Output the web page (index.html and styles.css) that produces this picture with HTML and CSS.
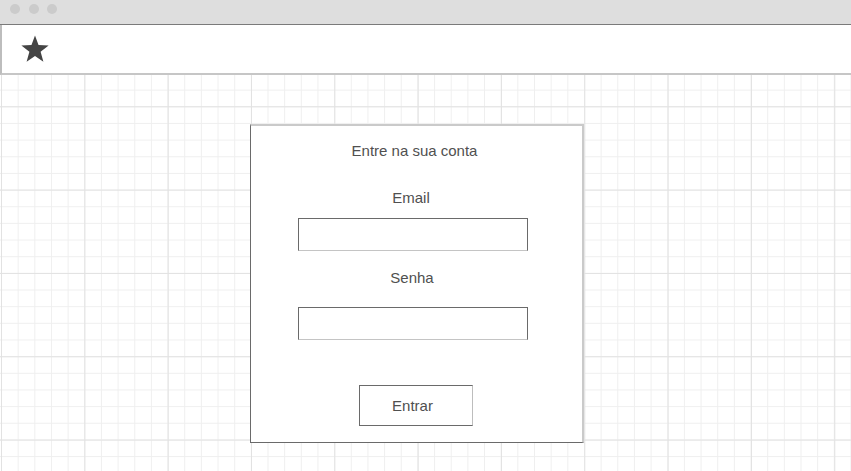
FILE: index.html
```html
<!DOCTYPE html>
<html lang="pt">
<head>
<meta charset="utf-8">
<title>Entre na sua conta</title>
<link rel="stylesheet" href="styles.css">
</head>
<body>
<div class="window">
  <div class="titlebar">
    <span class="dot"></span><span class="dot"></span><span class="dot"></span>
  </div>
  <div class="toolbar">
    <svg class="star" width="30" height="28" viewBox="0 0 24 23">
      <path d="M12 0.5 L14.9 8.3 L23.2 8.6 L16.6 13.8 L18.9 21.9 L12 17.2 L5.1 21.9 L7.4 13.8 L0.8 8.6 L9.1 8.3 Z" fill="#444"/>
    </svg>
  </div>
  <div class="canvas">
    <form class="card">
      <div class="title">Entre na sua conta</div>
      <label class="label label-email">Email</label>
      <div class="input input-email"></div>
      <label class="label label-senha">Senha</label>
      <div class="input input-senha"></div>
      <div class="button">Entrar</div>
    </form>
  </div>
</div>
</body>
</html>
```
FILE: styles.css
```css
html, body {
  margin: 0;
  padding: 0;
  width: 851px;
  height: 471px;
  overflow: hidden;
  background: #fff;
  font-family: "Liberation Sans", Arial, sans-serif;
  color: #505050;
}
.window {
  display: flex;
  flex-direction: column;
  height: 471px;
}
.titlebar {
  background: #dedede;
  border-bottom: 1px solid #7a7a7a;
  display: flex;
  align-items: flex-start;
  gap: 8.5px;
  padding-left: 10px;
  padding-top: 4px;
  box-sizing: border-box;
  height: 25px;
}
.dot {
  width: 10px;
  height: 10px;
  border-radius: 50%;
  background: #cbcbcb;
}
.toolbar {
  height: 48px;
  border-left: 2px solid #bdbdbd;
  border-bottom: 2px solid #c6c6c6;
  background: #fff;
  display: flex;
  align-items: center;
  padding-left: 18px;
}
.star {
  display: block;
  margin-top: -1px;
}
.canvas {
  flex: 1;
  background-color: #fff;
  background-image:
    linear-gradient(to right, #e2e2e2 1px, transparent 1px),
    linear-gradient(to bottom, #e2e2e2 1px, transparent 1px),
    linear-gradient(to right, #efefef 1px, transparent 1px),
    linear-gradient(to bottom, #efefef 1px, transparent 1px);
  background-size: 83.33px 83.33px, 83.33px 83.33px, 16.667px 16.667px, 16.667px 16.667px;
  background-position: 1px 31.3px, 1px 31.3px, 1px 31.3px, 1px 31.3px;
  padding-top: 49px;
  padding-left: 250px;
}
.card {
  margin: 0;
  width: 331px;
  height: 316px;
  background: #fff;
  border-left: 1px solid #6a6a6a;
  border-bottom: 1px solid #6a6a6a;
  border-top: 2px solid #cacaca;
  border-right: 2px solid #cacaca;
  display: flex;
  flex-direction: column;
  align-items: center;
  font-size: 15px;
}
.title {
  margin-top: 16px;
  line-height: 18px;
  margin-left: -4px;
}
.label {
  display: block;
  line-height: 18px;
}
.label-email {
  margin-top: 29px;
  margin-left: -11px;
}
.label-senha {
  margin-top: 18px;
  margin-left: -9px;
}
.input {
  width: 228px;
  height: 31px;
  margin-left: -7px;
  border: 1px solid #6a6a6a;
  border-bottom-color: #c4c4c4;
}
.input-email {
  margin-top: 11px;
}
.input-senha {
  margin-top: 20px;
}
.button {
  margin-top: 45px;
  margin-left: -2px;
  width: 106px;
  height: 39px;
  border: 1px solid #6a6a6a;
  border-right-color: #bdbdbd;
  display: flex;
  align-items: center;
  justify-content: center;
  padding-right: 6px;
  box-sizing: content-box;
}
```
